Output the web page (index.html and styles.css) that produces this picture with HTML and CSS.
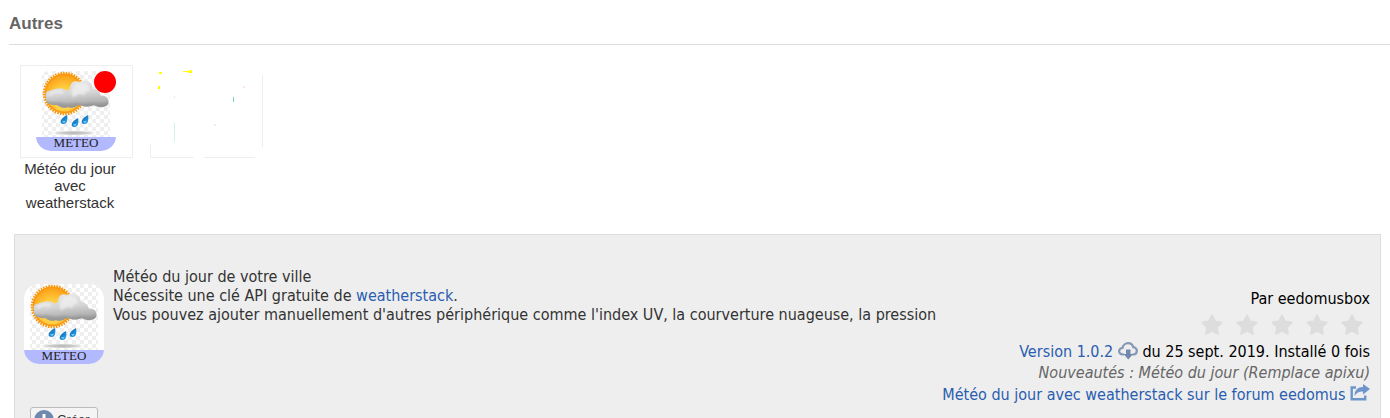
FILE: index.html
```
<!DOCTYPE html>
<html lang="fr">
<head>
<title>Autres</title>
<meta charset="utf-8"><meta name="viewport" value="width=device-width, initial-scale=1">
<link rel="stylesheet" href="styles.css">
</head>
<body>
<svg class="defs" width="0" height="0" aria-hidden="true">
	<defs>
		<pattern id="check" width="8" height="8" patternUnits="userSpaceOnUse">
			<rect width="8" height="8" fill="#fff"/>
			<path d="M0 0h4v4H0zM4 4h4v4H4z" fill="#efefef"/>
		</pattern>
		<radialGradient id="sun" cx=".5" cy=".65" r=".6">
			<stop offset="0" stop-color="#fff06a"/>
			<stop offset=".6" stop-color="#ffc638"/>
			<stop offset="1" stop-color="#fba51c"/>
		</radialGradient>
		<linearGradient id="cloud" x1=".3" y1="0" x2=".5" y2="1">
			<stop offset="0" stop-color="#e8e8e8"/>
			<stop offset=".5" stop-color="#d4d4d4"/>
			<stop offset="1" stop-color="#a2a2a2"/>
		</linearGradient>
		<linearGradient id="drop" x1="0" y1="0" x2="1" y2="1">
			<stop offset="0" stop-color="#0a5fa8"/>
			<stop offset="1" stop-color="#29a8f0"/>
		</linearGradient>
		<radialGradient id="shade">
			<stop offset="0" stop-color="#b4b4b4"/>
			<stop offset=".6" stop-color="#d0d0d0"/>
			<stop offset="1" stop-color="#eee" stop-opacity="0"/>
		</radialGradient>
		<filter id="soft"><feGaussianBlur stdDeviation="1"/></filter>
		<clipPath id="round"><rect width="80" height="80" rx="15"/></clipPath>
		<clipPath id="cloud-clip"><use href="#cloud-shape"/></clipPath>
		<path id="cloud-shape" d="M13 20C18 18 24 16 28 18C30 19 31 20 33 19C34 16 35 12 37 11C40 9 44 12 46 10C52 8 56 12 57 18C62 18 64 22 65 25C71 24 74 29 72 33C70 37 62 37 58 34C52 37 46 35 43 34C39 36 36 38 32 36C27 38 24 36 21 34C14 35 9 31 10 27C9 23 10 20 13 20z"/>
		<g id="waterdrop">
			<path d="M3 -5C3.800 -1 3.500 4 -.5 4C-5 4-4.500-1 3-5z" fill="url(#drop)"/>
			<path d="M-1.500 .5C-.5 2 1 1.500 1.500 .3C1.300 4-2 3-1.500 .5z" fill="#9be0ff"/>
		</g>
		<symbol id="meteo" viewBox="0 0 80 80">
			<g clip-path="url(#round)">
				<rect width="80" height="80" fill="#fff"/>
				<rect x="6" width="68" height="66" fill="url(#check)"/>
				<circle cx="28.500" cy="22.500" r="20.500" fill="none" stroke="#f79a13" stroke-width="2.500" stroke-dasharray="1.600 1.100"/>
				<circle cx="28.500" cy="22.500" r="19" fill="url(#sun)" stroke="#f99a10" stroke-width="1.800"/>
				<use href="#cloud-shape" fill="url(#cloud)"/>
				<g clip-path="url(#cloud-clip)">
					<g filter="url(#soft)">
						<path d="M8 29C17 33 22 30 27 32C33 34 38 31 43 32C49 34 54 31 60 32C66 33 70 32 74 30V40H8z" fill="#8a8a8a" opacity=".55"/>
						<path d="M37 17C39 12 44 12 47 12C51 12 54 15 54 20C51 19 48 22 48 25C45 21 40 24 37 27C36 23 35 20 37 17z" fill="#f2f2f2" opacity=".7"/>
						<path d="M13 24C17 20 23 20 27 22" fill="none" stroke="#f2f2f2" stroke-width="3" opacity=".7"/>
					</g>
				</g>
				<use href="#waterdrop" x="28" y="49"/>
				<use href="#waterdrop" x="39" y="52"/>
				<use href="#waterdrop" x="49" y="49"/>
				<ellipse cx="38" cy="62" rx="24" ry="2.500" fill="url(#shade)"/>
				<rect y="66" width="80" height="14" fill="#b3b9ff"/>
				<text x="40" y="76" text-anchor="middle" class="meteo-text">METEO</text>
			</g>
		</symbol>
		<symbol id="star" viewBox="0 0 24 24">
			<path d="M12 2.500l3 6 6.500 1-4.700 4.700 1.100 6.600L12 17.700l-5.900 3.100 1.100-6.600L2.500 9.500l6.500-1z" fill="#ddd" stroke="#ddd" stroke-width="2" stroke-linejoin="round"/>
		</symbol>
	</defs>
</svg>

<h2>Autres</h2>

<div class="apps">
	<a class="app" href="#detail">
		<span class="thumb">
			<svg class="meteo" role="img" aria-label="METEO"><use href="#meteo"/></svg>
			<i class="dot"></i>
		</span>
		<span class="name">Météo du jour avec weatherstack</span>
	</a>
	<div class="app">
		<!-- faded thumbnail: only a few edges are left -->
		<svg class="ghost" viewBox="0 0 113 93" aria-hidden="true">
			<path d="M.5 79v13.500h43M54 92.500h51M112.500 10v72" fill="none" stroke="#eee"/>
			<path d="M9 7h3v2H9zM37 6l5-1v3h-3zM8 21h2v3H8zM33 6h5v1h-5z" fill="#ff0"/>
			<path d="M24 31h1v2h-1zM24 58h1v19h-1z" fill="#d0f4e2"/>
			<path d="M83 32h1v5h-1z" fill="#7ad8a6"/>
			<path d="M93 23l2-2" stroke="#fcc"/>
			<path d="M64 60h2" stroke="#ddd"/>
		</svg>
	</div>
</div>

<div id="detail" class="panel">
	<div class="info">
		<svg class="meteo" role="img" aria-label="METEO"><use href="#meteo"/></svg>
		<p class="desc">
			Météo du jour de votre ville<br>
			Nécessite une clé API gratuite de <a href="#">weatherstack</a>.<br>
			Vous pouvez ajouter manuellement d'autres périphérique comme l'index UV, la courverture nuageuse, la pression
		</p>
		<div class="meta">
			<div>Par eedomusbox</div>
			<div class="stars" role="img" aria-label="0 sur 5">
				<svg><use href="#star"/></svg>
				<svg><use href="#star"/></svg>
				<svg><use href="#star"/></svg>
				<svg><use href="#star"/></svg>
				<svg><use href="#star"/></svg>
			</div>
			<div class="version">
				<a href="#">Version 1.0.2
					<svg class="icon" viewBox="0 0 20 18">
						<path d="M6 12.500H5C2 12.500 1 10.500 1.200 9C1.400 7 3 6 4.500 6C5 3 7.500 1.200 10 1.200C13 1.200 14.700 3 15.200 5.200C17.500 5.300 19 7 18.800 9C18.700 11 17.500 12.500 15.500 12.500H14" fill="none" stroke="#8497b3" stroke-width="2.200"/>
						<path d="M8 7.500h4.500v4.500h2.500l-4.700 5.500-4.800-5.500H8z" fill="#6f88ad"/>
					</svg></a>
				du 25 sept. 2019. Installé 0 fois
			</div>
			<div class="news">Nouveautés : Météo du jour (Remplace apixu)</div>
			<div class="forum">
				<a href="#">Météo du jour avec weatherstack sur le forum eedomus
					<svg class="icon" viewBox="0 0 20 18">
						<path d="M6 3.500H1.700v11.800h13.500V11.500" fill="none" stroke="#6c96ca" stroke-width="2.400"/>
						<path d="M4.500 12C4.500 6 8 3 13 3V0L20 5L13 10.500V7.500C9.500 7.300 6.500 8.500 4.500 12z" fill="#6c96ca"/>
					</svg></a>
			</div>
		</div>
	</div>
	<button class="create">
		<svg viewBox="0 0 20 20"><circle cx="10" cy="10" r="10" fill="#6f88ad"/><path d="M10 4v12M4 10h12" stroke="#fff" stroke-width="3"/></svg>
		Créer
	</button>
</div>
</body>
</html>
```
FILE: styles.css
```
*{box-sizing: border-box;}
html{overflow: hidden;}
body{
	margin: 0;
	padding: 12px 0 0 9px;
	font-family: Tahoma, 'DejaVu Sans Condensed', sans-serif;
	font-size: 16px;
	color: #333;
	background: #fff;
}
a{
	color: #2a5db0;
	text-decoration: none;
}
.defs{position: absolute;}
h2{
	margin: 0;
	padding-bottom: 8px;
	border-bottom: 1px solid #ddd;
	font: bold 17px/24px 'Liberation Sans', sans-serif;
	color: #666;
}

.apps{
	display: flex;
	gap: 17px;
	padding: 20px 11px 0 11px;
}
.app{
	width: 113px;
	font: 15px/17px 'Liberation Sans', sans-serif;
	color: #333;
	text-align: center;
}
.thumb{
	position: relative;
	display: block;
	height: 93px;
	margin-bottom: 2px;
	padding: 5px 0 0 15px;
	border: 1px solid #eee;
	text-align: left;
}
.name{
	display: block;
	width: 100px;
}
.ghost{
	display: block;
	width: 113px;
	height: 93px;
}
.dot{
	position: absolute;
	top: 5px;
	right: 16px;
	width: 22px;
	height: 22px;
	border-radius: 50%;
	background: #f00;
}
.meteo{
	flex: none;
	display: block;
	width: 80px;
	height: 80px;
}
.meteo-text{
	font: 13px 'Liberation Serif', serif;
	fill: #222;
}

.panel{
	margin: 23px 9px 0 5px;
	padding: 32px 10px 20px 9px;
	border: 1px solid #ddd;
	background: #eee;
}
.info{
	display: flex;
	align-items: flex-start;
}
.info .meteo{margin: 17px 9px 0 0;}
.desc{
	flex: 1;
	margin: 0;
	line-height: 19px;
}
.meta{
	flex: none;
	padding-top: 21px;
	line-height: 21px;
	color: #000;
	text-align: right;
}
.stars{
	display: flex;
	justify-content: flex-end;
	gap: 11px;
	padding: 4px 6px 4px 0;
}
.stars svg{
	width: 24px;
	height: 24px;
}
.icon{
	width: 20px;
	height: 18px;
	vertical-align: -3px;
}
.news{
	font-style: italic;
	color: #666;
}
.forum{line-height: 24px;}
.forum .icon{vertical-align: -2px;}
.create{
	display: flex;
	align-items: center;
	gap: 3px;
	margin: 0 0 0 6px;
	padding: 2px 7px 2px 3px;
	border: 1px solid #bbb;
	border-radius: 3px;
	background: #f4f4f4;
	font: 13px/20px 'Liberation Sans', sans-serif;
	color: #333;
}
.create svg{
	width: 20px;
	height: 20px;
}
```
